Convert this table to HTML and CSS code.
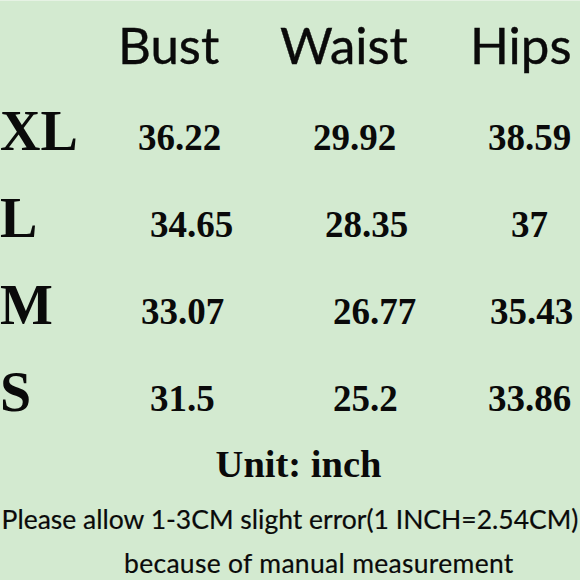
FILE: index.html
```html
<!DOCTYPE html>
<html>
<head>
<meta charset="utf-8">
<link rel="stylesheet" href="styles.css">
</head>
<body>
<div class="page">
  <div class="head">
    <span></span>
    <span class="h">Bust</span>
    <span class="h">Waist</span>
    <span class="h">Hips</span>
  </div>
  <div class="table">
    <div class="row">
      <span class="size">XL</span>
      <span class="v">36.22</span>
      <span class="v">29.92</span>
      <span class="v">38.59</span>
    </div>
    <div class="row">
      <span class="size">L</span>
      <span class="v s12">34.65</span>
      <span class="v s12">28.35</span>
      <span class="v s23">37</span>
    </div>
    <div class="row">
      <span class="size">M</span>
      <span class="v s3">33.07</span>
      <span class="v s20">26.77</span>
      <span class="v s2">35.43</span>
    </div>
    <div class="row">
      <span class="size">S</span>
      <span class="v s12">31.5</span>
      <span class="v s20">25.2</span>
      <span class="v">33.86</span>
    </div>
  </div>
  <div class="unit">Unit: inch</div>
  <div class="note">Please allow 1-3CM slight error(1 INCH=2.54CM)</div>
  <div class="note2">because of manual measurement</div>
</div>
</body>
</html>
```
FILE: styles.css
```css
html, body {
  margin: 0;
  padding: 0;
}
body {
  background: #d3ead0;
}
.page {
  width: 580px;
  height: 580px;
  overflow: hidden;
  background: #d3ead0;
  border-top: 1px solid #e6f2e4;
  box-sizing: border-box;
  color: #0a0a0a;
}
.head {
  display: grid;
  grid-template-columns: 118px 162px 190px 1fr;
  height: 87px;
  line-height: 87px;
  font-family: Lato, "Open Sans", sans-serif;
  font-size: 51px;
  white-space: nowrap;
  -webkit-text-stroke: 0.4px #0a0a0a;
}
.table {
  display: flex;
  flex-direction: column;
}
.row {
  display: grid;
  grid-template-columns: 138px 175px 175px 92px;
  align-items: baseline;
  height: 87px;
  line-height: 87px;
  font-family: "Liberation Serif", "Times New Roman", serif;
  font-weight: bold;
  white-space: nowrap;
}
.size {
  font-size: 56px;
}
.v {
  font-size: 37px;
  justify-self: start;
}
.s2 { margin-left: 2px; }
.s3 { margin-left: 3px; }
.s12 { margin-left: 12px; }
.s20 { margin-left: 20px; }
.s23 { margin-left: 23px; }
.unit {
  font-family: "Liberation Serif", "Times New Roman", serif;
  font-weight: bold;
  font-size: 38.5px;
  line-height: 57px;
  text-align: center;
  padding-left: 17px;
}
.note {
  font-family: Lato, "Open Sans", sans-serif;
  font-size: 26.5px;
  line-height: 53px;
  text-align: center;
  white-space: nowrap;
  -webkit-text-stroke: 0.2px #0a0a0a;
}
.note2 {
  font-family: Lato, "Open Sans", sans-serif;
  font-size: 26.5px;
  line-height: 30px;
  padding-top: 2px;
  padding-left: 124px;
  letter-spacing: 0.3px;
  white-space: nowrap;
  -webkit-text-stroke: 0.2px #0a0a0a;
}
```
